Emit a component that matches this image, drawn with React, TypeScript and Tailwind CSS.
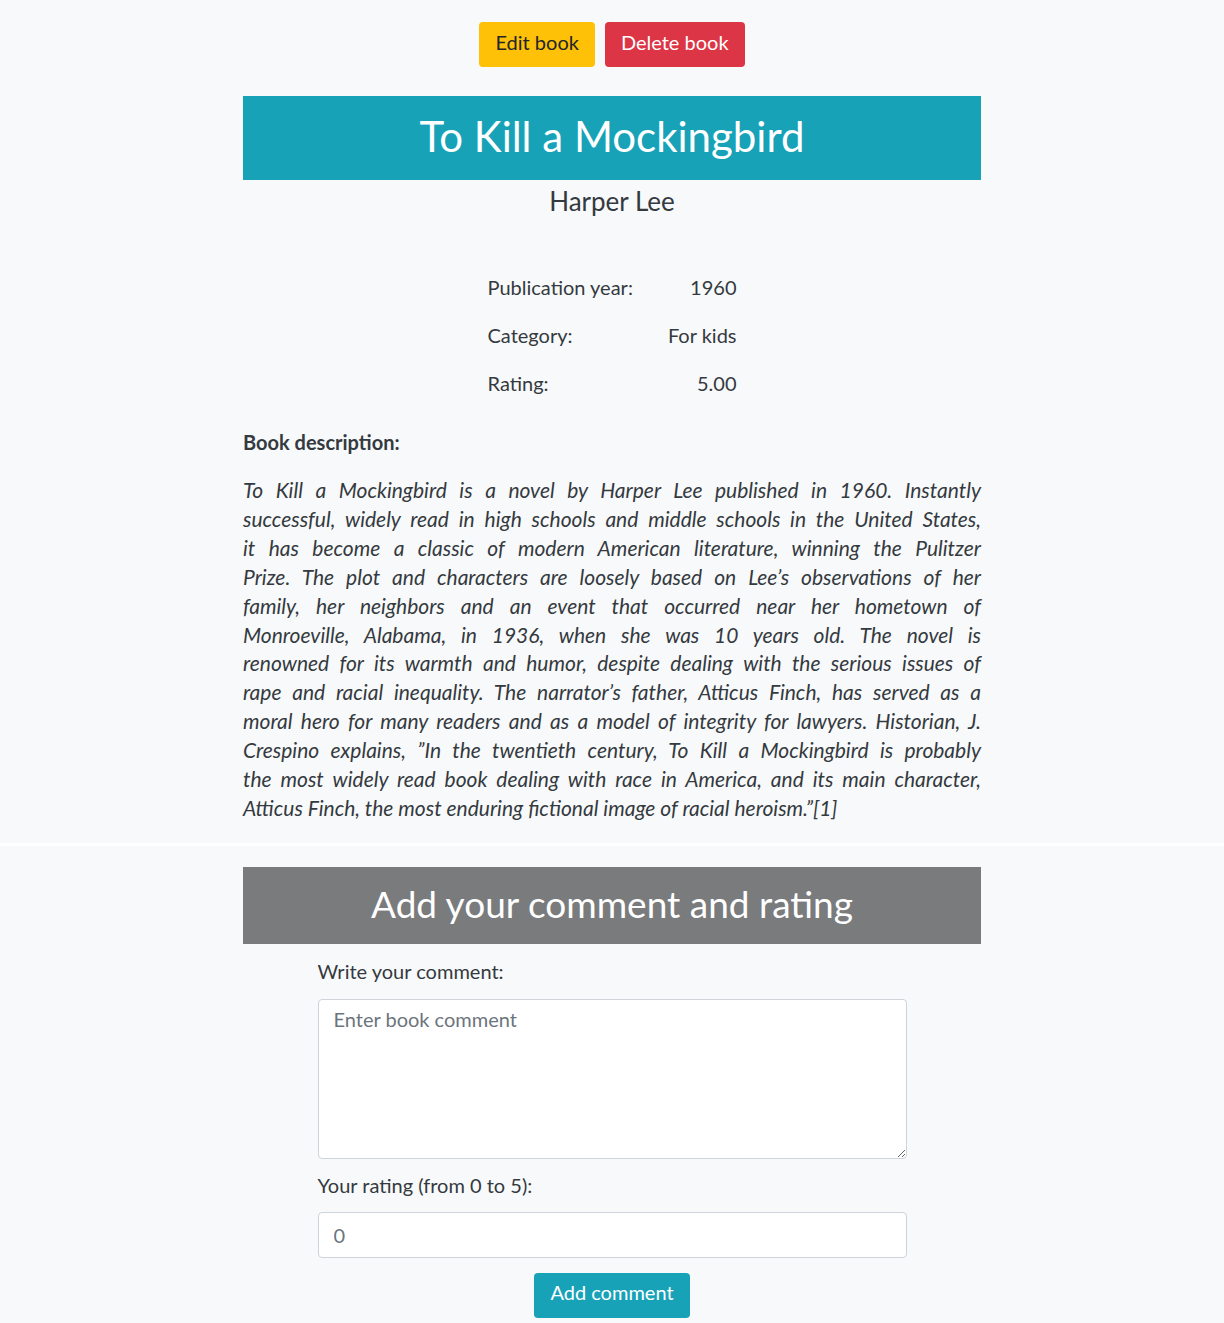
import { type FC } from "react";

const descriptionLines = [
  "To Kill a Mockingbird is a novel by Harper Lee published in 1960. Instantly",
  "successful, widely read in high schools and middle schools in the United States,",
  "it has become a classic of modern American literature, winning the Pulitzer",
  "Prize. The plot and characters are loosely based on Lee’s observations of her",
  "family, her neighbors and an event that occurred near her hometown of",
  "Monroeville, Alabama, in 1936, when she was 10 years old. The novel is",
  "renowned for its warmth and humor, despite dealing with the serious issues of",
  "rape and racial inequality. The narrator’s father, Atticus Finch, has served as a",
  "moral hero for many readers and as a model of integrity for lawyers. Historian, J.",
  "Crespino explains, ”In the twentieth century, To Kill a Mockingbird is probably",
  "the most widely read book dealing with race in America, and its main character,",
  "Atticus Finch, the most enduring fictional image of racial heroism.”[1]",
];

const details = [
  { label: "Publication year:", value: "1960" },
  { label: "Category:", value: "For kids" },
  { label: "Rating:", value: "5.00" },
];

const BookDetails: FC = () => (
  <section className="flex flex-col items-center pt-[22px] pb-[20px]">
    <div className="flex gap-[10px]">
      <button className="h-[45px] rounded-[4px] bg-[#ffc107] px-[16px] pb-[6px] text-[20px] text-[#212529]">
        Edit book
      </button>
      <button className="h-[45px] rounded-[4px] bg-[#dc3545] px-[16px] pb-[6px] text-[20px] text-white">
        Delete book
      </button>
    </div>

    <div className="mt-[29px] w-[738px]">
      <h1 className="flex h-[84px] items-center justify-center bg-[#17a2b8] pb-[4px] text-[42px] text-white">
        To Kill a Mockingbird
      </h1>
      <h2 className="mt-[4px] text-center text-[26px] leading-[34px] text-[#343a40]">Harper Lee</h2>

      <table className="mx-auto mt-[45px] w-[249px] text-[20px] text-[#343a40]">
        <tbody>
          {details.map((row) => (
            <tr key={row.label} className="h-[48px]">
              <td className="text-left">{row.label}</td>
              <td className="text-right">{row.value}</td>
            </tr>
          ))}
        </tbody>
      </table>

      <h3 className="mt-[20px] text-[20px] font-bold text-[#343a40]">Book description:</h3>
      <div className="mt-[19px] text-[21px] leading-[28.9px] text-[#343a40] italic">
        {descriptionLines.map((line, i) => (
          <div
            key={i}
            className={
              i < descriptionLines.length - 1
                ? "whitespace-nowrap text-justify [text-align-last:justify]"
                : "whitespace-nowrap"
            }
          >
            {line}
          </div>
        ))}
      </div>
    </div>
  </section>
);

const CommentForm: FC = () => (
  <section className="flex flex-col items-center pt-[21px] pb-[5px]">
    <h2 className="flex h-[77px] w-[738px] items-center justify-center bg-[#7a7b7d] pb-[4px] text-[37px] text-white">
      Add your comment and rating
    </h2>
    <form className="mt-[12px] flex w-[589px] flex-col">
      <label className="text-[20px] text-[#343a40]">Write your comment:</label>
      <textarea
        className="mt-[13px] h-[160px] rounded-[4px] border border-[#ced4da] bg-white px-[15px] py-[4px] text-[20px] text-[#495057] placeholder:text-[#6c757d]"
        placeholder="Enter book comment"
      />
      <label className="mt-[11px] text-[20px] text-[#343a40]">Your rating (from 0 to 5):</label>
      <input
        className="mt-[12px] h-[46px] rounded-[4px] border border-[#ced4da] bg-white px-[15px] text-[20px] text-[#6c757d]"
        defaultValue="0"
      />
      <button
        type="button"
        className="mx-auto mt-[15px] h-[45px] rounded-[4px] bg-[#17a2b8] px-[16px] pb-[6px] text-[20px] text-white"
      >
        Add comment
      </button>
    </form>
  </section>
);

export default function App() {
  return (
    <div className="min-h-[1323px] bg-[#f8f9fa] font-['Lato',sans-serif]">
      <BookDetails />
      <div className="h-[3px] bg-white" />
      <CommentForm />
    </div>
  );
}
